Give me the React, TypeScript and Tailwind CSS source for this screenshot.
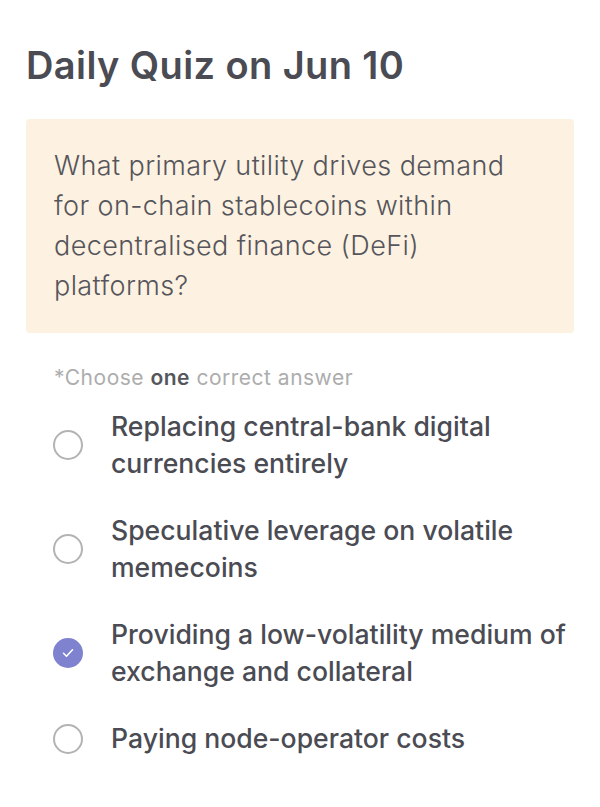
import React from "react";

const options = [
  "Replacing central-bank digital currencies entirely",
  "Speculative leverage on volatile memecoins",
  "Providing a low-volatility medium of exchange and collateral",
  "Paying node-operator costs",
];

export default function App() {
  const selected = 2;
  return (
    <div
      className="min-h-[807px] w-[600px] bg-white px-[26px] pt-[40px]"
      style={{ fontFamily: "Inter, 'Noto Sans', sans-serif" }}
    >
      <h1 className="text-[38px] leading-[50px] font-semibold tracking-[0.4px] text-[#4a4b53]">
        Daily Quiz on Jun 10
      </h1>
      <div className="mt-[29px] w-[548px] rounded-[4px] bg-[#fdf1e1] pl-[28px] pr-[40px] pt-[27px] pb-[27px]">
        <p className="text-[27px] leading-[40px] font-light tracking-[0.4px] text-[#55555b]">
          What primary utility drives demand for on-chain stablecoins within decentralised finance (DeFi) platforms?
        </p>
      </div>
      <p className="mt-[31px] pl-[28px] text-[21px] leading-[28px] tracking-[0.5px] text-[#adadad]">
        *Choose <span className="font-semibold text-[#55565c]">one</span> correct answer
      </p>
      <div className="mt-[16px] flex flex-col gap-[30px] pl-[27px]">
        {options.map((o, i) => (
          <div key={i} className="flex items-center gap-[28px]">
            {i === selected ? (
              <div className="flex h-[30px] w-[30px] shrink-0 items-center justify-center rounded-full bg-[#7f82cf]">
                <svg width="18" height="18" viewBox="0 0 18 18" fill="none">
                  <path d="M4.5 9.3l3 3 6-6.5" stroke="white" strokeWidth="1.6" strokeLinecap="round" strokeLinejoin="round" />
                </svg>
              </div>
            ) : (
              <div className="h-[30px] w-[30px] shrink-0 rounded-full border-2 border-[#b3b3b3]" />
            )}
            <span className="text-[26.6px] leading-[37px] font-medium text-[#4a4b53]">{o}</span>
          </div>
        ))}
      </div>
    </div>
  );
}
